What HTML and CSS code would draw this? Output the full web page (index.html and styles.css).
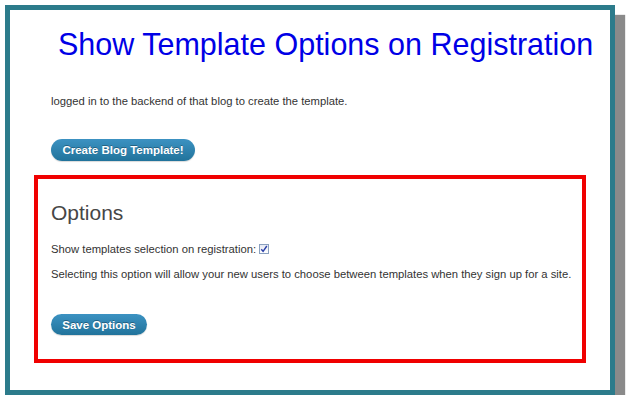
FILE: index.html
```html
<!DOCTYPE html>
<html>
<head>
<meta charset="utf-8">
<link rel="stylesheet" href="styles.css">
</head>
<body>
<div class="frame">
  <h1 class="title">Show Template Options on Registration</h1>
  <p class="intro">logged in to the backend of that blog to create the template.</p>
  <button class="btn btn-create">Create Blog Template!</button>
  <div class="options">
    <h2 class="options-title">Options</h2>
    <p class="row">Show templates selection on registration: <span class="check"><svg width="8" height="8" viewBox="0 0 8 8"><path d="M1.3 4.2 L3.1 6.4 L6.8 1" fill="none" stroke="#2a3fa8" stroke-width="1.4"/></svg></span></p>
    <p class="desc">Selecting this option will allow your new users to choose between templates when they sign up for a site.</p>
    <button class="btn btn-save">Save Options</button>
  </div>
</div>
</body>
</html>
```
FILE: styles.css
```css
html, body {
  margin: 0;
  padding: 0;
  background: #ffffff;
}
body {
  font-family: "Liberation Sans", Arial, sans-serif;
}
.frame {
  margin: 5px 0 0 5px;
  width: 600px;
  height: 380px;
  border: 5px solid #2c7b8b;
  background: #ffffff;
  box-shadow: 10px 10px 1px #8a8a8a;
  box-sizing: content-box;
}
.title {
  margin: 17px 0 0 48px;
  font-size: 30.5px;
  line-height: 34px;
  font-weight: normal;
  color: #0000e6;
}
.intro {
  margin: 34px 0 0 41px;
  font-size: 11.25px;
  line-height: 13px;
  color: #333333;
}
.btn {
  display: block;
  border: none;
  border-radius: 11px;
  background: linear-gradient(#3c92c2, #21739b);
  color: #ffffff;
  font-family: "Liberation Sans", Arial, sans-serif;
  font-weight: bold;
  font-size: 11.5px;
  text-shadow: 0 -1px 0 rgba(0, 0, 0, 0.3);
  padding: 0;
  box-shadow: 0 1px 1px rgba(0, 0, 0, 0.15);
}
.btn-create {
  margin: 31px 0 0 41px;
  height: 22px;
  width: 144px;
}
.options {
  margin: 14px 24px 0 24px;
  border: 4px solid #f00000;
  padding: 22px 8px 24px 13px;
}
.options-title {
  margin: 0;
  font-size: 21px;
  line-height: 24px;
  font-weight: normal;
  color: #464646;
}
.row {
  margin: 18px 0 0 0;
  font-size: 11.25px;
  line-height: 13px;
  color: #333333;
  display: flex;
  align-items: center;
}
.check {
  display: inline-flex;
  align-items: center;
  justify-content: center;
  width: 8px;
  height: 8px;
  margin-left: 3px;
  margin-top: -2px;
  border: 1px solid #8aa0bf;
  background: linear-gradient(#e6e9f2, #ffffff);
}
.desc {
  margin: 12px 0 0 0;
  font-size: 11.25px;
  line-height: 13px;
  color: #333333;
  white-space: nowrap;
}
.btn-save {
  margin-top: 33px;
  height: 21px;
  width: 96px;
}
```
